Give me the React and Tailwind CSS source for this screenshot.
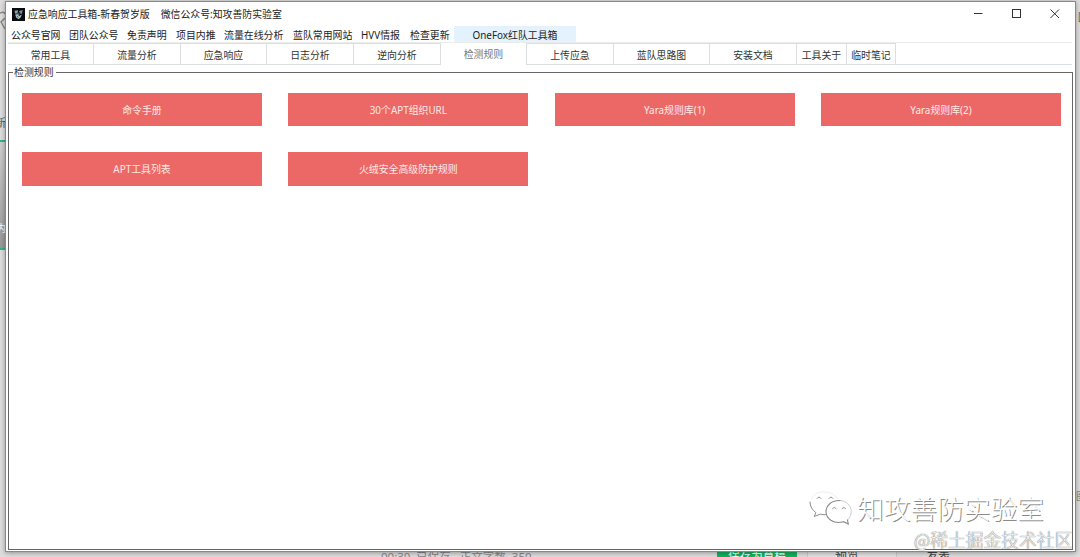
import React, { useState } from 'react';
import clsx from 'clsx';

const MENU = [
  { label: '公众号官网', w: 'w-[58px]' },
  { label: '团队公众号', w: 'w-[58px]' },
  { label: '免责声明', w: 'w-[49px]' },
  { label: '项目内推', w: 'w-[48px]' },
  { label: '流量在线分析', w: 'w-[69px]' },
  { label: '蓝队常用网站', w: 'w-[68px]' },
  { label: 'HVV情报', w: 'w-[49px]' },
  { label: '检查更新', w: 'w-[44px]' },
];

const TABS = [
  { label: '常用工具', w: 'w-[86px]' },
  { label: '流量分析', w: 'w-[87px]' },
  { label: '应急响应', w: 'w-[86px]' },
  { label: '日志分析', w: 'w-[87px]' },
  { label: '逆向分析', w: 'w-[87px]' },
  { label: '检测规则', w: 'w-[86px]' },
  { label: '上传应急', w: 'w-[87px]' },
  { label: '蓝队思路图', w: 'w-[96px]' },
  { label: '安装文档', w: 'w-[87px]' },
  { label: '工具关于', w: 'w-[50px]' },
  { label: '临时笔记', w: 'w-[49px]' },
];

const RULES = [
  '命令手册',
  '30个APT组织URL',
  'Yara规则库(1)',
  'Yara规则库(2)',
  'APT工具列表',
  '火绒安全高级防护规则',
];

const AppIcon = () => (
  <svg viewBox="0 0 13 13" className="w-[13px] h-[13px] shrink-0">
    <rect width="13" height="13" fill="#080c10" />
    <path d="M2.500 2.800 6 2.200 5.600 5 3.400 6Z" fill="#8fa3ad" />
    <path d="M7.200 3 10.600 2 10 5.800 7.400 5.400Z" fill="#78929d" />
    <path d="M3.200 6.800 6 5.800 7 8 9.800 6.400 8.600 9.600 6.600 11.200 4.200 9.400Z" fill="#a9bcc4" />
    <path d="M6 4.400 7.600 6.200 6.600 7.400 5.200 6Z" fill="#4d6b78" />
    <path d="M5.200 8.200l1.200 1.200M8 4l-.6 1.800" stroke="#0a1418" strokeWidth=".7" />
  </svg>
);

const WindowButtons = () => (
  <svg viewBox="0 0 86 10" className="w-[86px] h-[10px]" fill="none" stroke="#333" strokeWidth="1">
    <path d="M0 4.500h8.500" />
    <rect x="38.500" y="0.500" width="8" height="8" />
    <path d="M76.500 .5l8.500 8.500M85 .5l-8.500 8.500" />
  </svg>
);

const WechatMark = () => (
  <svg viewBox="0 0 44 36" className="w-[44px] h-[36px] shrink-0" fill="none" strokeLinecap="round">
    <path d="M2.500 9C5 3.500 10 1.500 15.500 2c6 .2 11 3 13.500 7" stroke="#eee" strokeWidth="1" />
    <path d="M1 12c0 4.500 2.300 8 5.800 10.500L5.300 26.500l6-2.400c1.800.6 3.500.8 5.200.6" stroke="#8c8c8c" strokeWidth="1" />
    <path d="M38.500 30C46 23 42 10.500 30 10.500" stroke="#ccc" strokeWidth="1" />
    <path d="M31 10.500c-8-.2-14 4.500-14 11 0 7.500 8 13 17.500 10.200l4.800 2.300-.8-4" stroke="#888" strokeWidth="1.100" />
    <path d="M8 8.500q2-3 4 0M20 8.500q2-3 4 0M23.500 18.500q1.800-2.500 3.600 0M33 18.500q1.800-2.500 3.600 0" stroke="#909090" strokeWidth="1" />
  </svg>
);

// parts of the page that sit behind the window
const Backdrop = () => (
  <div className="absolute inset-0 overflow-hidden bg-[#dedede] text-[#555]">
    <div className="absolute left-0 top-[140px] w-[6px] h-[110px] border-y-2 border-[#2fb58c] bg-linear-to-b from-[#cfcfcf] to-[#999]" />
    <svg viewBox="0 0 6 20" className="absolute left-0 top-[10px] w-[6px] h-[20px]" fill="none" stroke="#888" strokeWidth="1.500">
      <path d="M0 3q4-2 5 1M5 8 1 12l4 7" />
    </svg>
    <span className="absolute left-[-5px] top-[116px] text-[11px] leading-[14px]">新</span>
    <span className="absolute left-[-4px] top-[221px] text-[10px] leading-[14px] text-white">内</span>
    <span className="absolute left-[1078px] top-[10px] text-[10px] leading-[14px]">国</span>
    <span className="absolute left-[1076px] top-[489px] text-[10px] leading-[14px] text-[#888]">图</span>
    <span className="absolute left-[381px] top-[551px] text-[11.500px] leading-[12px] text-[#888] whitespace-pre">00:30  已保存   正文字数  350</span>
    <div className="absolute left-[717px] top-[550px] w-[80px] h-[10px] bg-[#13b35d] text-center text-[11.500px] leading-[11px] text-white">
      保存为草稿
    </div>
    <div className="absolute left-[807px] top-[550px] w-[90px] h-[10px] border-x border-[#ccc] bg-[#e4e4e4]" />
    <span className="absolute left-[835px] top-[550px] text-[12px] leading-[12px] text-[#444]">预览</span>
    <span className="absolute left-[926px] top-[550px] text-[12px] leading-[12px] text-[#444]">发表</span>
  </div>
);

const App = () => {
  const [tab, setTab] = useState('检测规则');

  return (
    <div className="relative w-[1080px] h-[557px] overflow-hidden font-['Noto_Sans','Noto_Sans_CJK_SC',sans-serif] text-[9.900px] text-[#222]">
      <Backdrop />

      <div className="relative ml-[5px] mt-px w-[1071px] h-[551px] flex flex-col bg-white border border-[#888] shadow-[0_1px_5px_rgba(0,0,0,0.35)]">
        <header className="h-[24px] shrink-0 flex items-center pl-[6px] pr-[15px]">
          <AppIcon />
          <h1 className="ml-[3px] whitespace-pre leading-[14px]">应急响应工具箱-新春贺岁版</h1>
          <span className="ml-[11px] leading-[14px]">微信公众号:知攻善防实验室</span>
          <div className="ml-auto"><WindowButtons /></div>
        </header>

        <nav className="h-[16px] shrink-0 flex items-center pl-[5px]">
          {MENU.map(({ label, w }) => (
            <button key={label} className={clsx('shrink-0 text-left whitespace-nowrap pt-px leading-[16px]', w)}>
              {label}
            </button>
          ))}
          <button className="w-[122px] h-[16px] bg-[#e3f2fd] pt-px leading-[16px] text-center">OneFox红队工具箱</button>
        </nav>

        <div className="h-[23px] ml-[2px] mr-[3px] shrink-0 flex border-t border-[#ececec] text-[#333]">
          {TABS.map(({ label, w }) => (
            <button
              key={label}
              onClick={() => setTab(label)}
              className={clsx(
                'shrink-0 whitespace-nowrap border-r border-[#dcdfe2]',
                w,
                tab === label ? 'pt-px leading-[21px] text-[#777]' : 'border-y pt-px leading-[20px]'
              )}
            >
              {label}
            </button>
          ))}
          <div className="flex-1 border-b border-[#d8dfe2]" />
        </div>

        <fieldset className="ml-[2px] mr-[2px] h-[485px] border border-[#666] pl-[13px] pr-[11px]">
          <legend className="ml-[-9px] pl-px pr-[2px] leading-[15px] text-[#333]">检测规则</legend>
          <div className="mt-[12.500px] grid grid-cols-[repeat(4,240px)] justify-between gap-y-[26px]">
            {RULES.map((rule) => (
              <button key={rule} className="h-[33.500px] bg-[#ec6866] pt-px text-[#ffe9e7] leading-[33px]">
                {rule}
              </button>
            ))}
          </div>
        </fieldset>
      </div>

      <div className="absolute left-[809px] top-[489px] flex items-center font-['Noto_Sans_CJK_SC',sans-serif]">
        <WechatMark />
        <span className="ml-[4px] whitespace-nowrap text-[26.700px] leading-[38px] font-light text-white [text-shadow:1px_1px_0_#8a8a8a]">
          知攻善防实验室
        </span>
      </div>
      <div className="absolute left-[914px] top-[528px] whitespace-nowrap font-['Noto_Sans_CJK_SC',sans-serif] text-[17.800px] leading-[22px] font-light text-[#f6f6f6] [text-shadow:0_0_1px_#666,0_0_1px_#888]">
        @稀土掘金技术社区
      </div>
    </div>
  );
};

export default App;
